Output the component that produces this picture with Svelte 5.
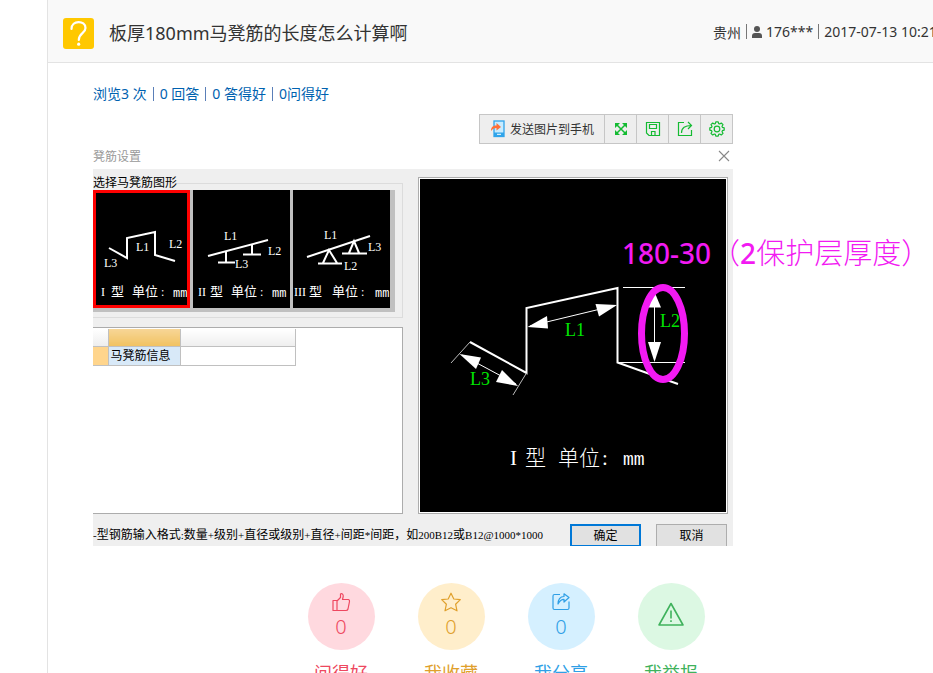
<script>
  const thumbs = [
    {
      box: '93 190 97 118',
      paths: ['M109 248L127 258V238L155 232V255L175 261'],
      labels: [['L1', 136, 251], ['L2', 169, 248], ['L3', 104, 267]],
      type: 'I', typeX: 101, x: 111, unitX: 132, mmX: 173
    },
    {
      box: '193 190 97 118',
      paths: ['M208 256L268 240', 'M226 251V262M218 262.5H235', 'M252 244V254M243 254.5H261'],
      labels: [['L1', 224, 240], ['L2', 268, 255], ['L3', 235, 268]],
      type: 'II', typeX: 198, x: 210, unitX: 231, mmX: 272
    },
    {
      box: '293 190 97 118',
      paths: ['M307 257L370 236', 'M323 263L329 250L337 263M318 263.5H342', 'M349 253L354 241L359 253M342 253.5H367'],
      labels: [['L1', 324, 239], ['L2', 344, 270], ['L3', 368, 251]],
      type: 'III', typeX: 294, x: 309, unitX: 332, mmX: 375
    }
  ];
  let selected = $state(0);
  let info = $state('');

  const stats = ['浏览3 次', '0 回答', '0 答得好', '0问得好'];

  const hint = '-型钢筋输入格式:数量+级别+直径或级别+直径+间距*间距，如200B12或B12@1000*1000';
  const hintParts = hint.match(/[\x21-\x7e]+|[^\x21-\x7e]+/g).map((text) => ({ text, latin: text.charCodeAt(0) < 127 }));

  const actions = [
    { kind: 'good', label: '问得好', count: '0' },
    { kind: 'fav', label: '我收藏', count: '0' },
    { kind: 'share', label: '我分享', count: '0' },
    { kind: 'report', label: '我举报', count: '' }
  ];
</script>

<main class="page">
  <header class="head">
    <svg class="badge" viewBox="0 0 31 31" aria-hidden="true">
      <rect width="31" height="31" rx="3" fill="#ffc800" />
      <path d="M8.500 11C8.500 1.800 22.500 2 22.500 10C22.500 15.500 15.800 15 15.800 22" fill="none" stroke="#fff" stroke-width="2.200" stroke-linecap="round" />
      <circle cx="15.700" cy="26.200" r="1.600" fill="#fff" />
    </svg>
    <h1>板厚180mm马凳筋的长度怎么计算啊</h1>
    <div class="meta">
      <span>贵州</span><i></i>
      <svg width="10" height="12" viewBox="0 0 10 12" aria-hidden="true">
        <circle cx="5" cy="3" r="3" fill="#555" />
        <path d="M0 12V10Q0 7 3 7H7Q10 7 10 10V12Z" fill="#555" />
      </svg>
      <span class="user">176***</span><i></i>
      <time>2017-07-13 10:21</time>
    </div>
  </header>

  <section class="content">
    <p class="stats">
      {#each stats as s, n}{#if n}<i></i>{/if}<span>{s}</span>{/each}
    </p>

    <div class="picture">
      <div class="toolbar">
        <button class="send">
          <svg width="16" height="18" viewBox="0 0 16 18" aria-hidden="true">
            <rect x="4" y="1" width="10" height="15.500" fill="#c8ecff" stroke="#2fa4ea" stroke-width="1.300" />
            <path d="M4 12.500H14V16H4Z" fill="#2fa4ea" />
            <path d="M7 14.300H11" stroke="#fff" />
            <path d="M1 11C1 7 3 5.500 6.500 5.500V3L11 7L6.500 10.500V8C4 8 2.500 9 1 11Z" fill="#ff7038" />
          </svg>
          <span>发送图片到手机</span>
        </button>
        <button aria-label="全屏">
          <svg width="16" height="16" viewBox="0 0 16 16">
            <path d="M3 3L13 13M13 3L3 13" stroke="#14bb32" stroke-width="1.500" />
            <path d="M2 2H7L2 7ZM14 2V7L9 2ZM2 14V9L7 14ZM14 14H9L14 9Z" fill="#14bb32" />
          </svg>
        </button>
        <button aria-label="保存">
          <svg width="16" height="16" viewBox="0 0 16 16" fill="none" stroke="#14bb32" stroke-width="1.200">
            <path d="M1.500 1.500H14.500V14.500H4L1.500 12ZM4.500 3.500H11.500V7.500H4.500ZM6.500 14.500V10.500H10V14.500" />
          </svg>
        </button>
        <button aria-label="分享">
          <svg width="16" height="16" viewBox="0 0 16 16" fill="none" stroke="#14bb32" stroke-width="1.200">
            <path d="M7 1.500H1.500V14.500H14.500V9M4.500 12C4.500 6.500 8 4.500 14.500 4.500M11 1L14.500 4.500L11 8" />
          </svg>
        </button>
        <button aria-label="设置">
          <svg width="16" height="16" viewBox="0 0 16 16" fill="none" stroke="#14bb32" stroke-width="1.200" stroke-linejoin="round">
            <path d="M6.300 2.600L6.800 .8H9.200L9.700 2.600L10.700 3L12.300 2L14 3.700L13 5.300L13.400 6.300L15.200 6.800V9.200L13.400 9.700L13 10.700L14 12.300L12.300 14L10.700 13L9.700 13.400L9.200 15.200H6.800L6.300 13.400L5.300 13L3.700 14L2 12.300L3 10.700L2.600 9.700L.8 9.200V6.800L2.600 6.300L3 5.300L2 3.700L3.700 2L5.300 3Z" />
            <circle cx="8" cy="8" r="2.800" />
          </svg>
        </button>
      </div>

      <div class="caption">
        <span>凳筋设置</span>
        <button aria-label="关闭">
          <svg width="12" height="12" viewBox="0 0 12 12"><path d="M1 1L11 11M11 1L1 11" stroke="#888" stroke-width="1.100" /></svg>
        </button>
      </div>

      <div class="dialog">
        <div class="columns">
          <div class="left">
            <fieldset>
              <legend>选择马凳筋图形</legend>
              <div class="thumbs">
                {#each thumbs as t, n}
                  <button class:selected={selected === n} onclick={() => (selected = n)}>
                    <svg viewBox={t.box}>
                      {#each t.paths as d}<path {d} fill="none" stroke="#fff" stroke-width="2" />{/each}
                      {#each t.labels as [text, x, y]}<text {x} {y} class="tiny">{text}</text>{/each}
                      <text x={t.typeX} y="296" class="tiny">{t.type}</text>
                      <text x={t.x} y="296" class="cjk">型</text>
                      <text x={t.unitX} y="296" class="cjk">单位</text>
                      <text x={t.unitX + 29} y="296" class="tiny">:</text>
                      <text x={t.mmX} y="297" class="mono">mm</text>
                    </svg>
                  </button>
                {/each}
              </div>
            </fieldset>

            <div class="sheet">
              <table>
                <colgroup><col class="c1" /><col class="c2" /><col class="c3" /></colgroup>
                <thead><tr><td></td><td class="on"></td><td></td></tr></thead>
                <tbody>
                  <tr>
                    <td class="mark"></td>
                    <th scope="row"><label for="info">马凳筋信息</label></th>
                    <td><input id="info" bind:value={info} /></td>
                  </tr>
                </tbody>
              </table>
            </div>
          </div>

          <div class="preview">
            <svg viewBox="420 179 306 333">
              <g fill="none" stroke="#fff">
                <path d="M470 342L526.500 373V308L617.500 288V362.500L678 384" stroke-width="2" />
                <path d="M623 287.500H685M618 362.500H685M654.500 295V360M530 326L615 305.500M462 355L516 384" />
                <path d="M470 342L451 363M526.500 373L513 395" stroke="#bbb" />
              </g>
              <g fill="#fff">
                <path d="M527.500 327L547 316L548 328.500Z" />
                <path d="M617 305L595.500 304L599 316.500Z" />
                <path d="M459.500 354L481 357.500L476 369Z" />
                <path d="M518 386L502 370L496 382Z" />
                <path d="M654.500 292L648 307.500H661Z" />
                <path d="M654.500 362L648 342H661Z" />
              </g>
              <g class="dims">
                <text x="565" y="336">L1</text>
                <text x="660" y="327">L2</text>
                <text x="470" y="385">L3</text>
              </g>
              <ellipse cx="663" cy="333.500" rx="21.500" ry="46" fill="none" stroke="#f21af2" stroke-width="7" />
              <g class="big">
                <text x="510" y="465">I</text>
                <text x="525" y="465">型</text>
                <text x="558" y="465">单位</text>
                <text x="602" y="465">:</text>
                <text x="623" y="465" class="bigmono">mm</text>
              </g>
            </svg>
          </div>
        </div>

        <div class="foot">
          <p>{#each hintParts as part}<span class:latin={part.latin}>{part.text}</span>{/each}</p>
          <button class="ok">确定</button>
          <button>取消</button>
        </div>
      </div>

      <div class="note"><b>180-30</b>（<b>2</b>保护层厚度）</div>
    </div>

    <div class="actions">
      {#each actions as a}
        <button class={a.kind}>
          <span class="disc">
            {#if a.kind === 'good'}
              <svg width="20" height="20" viewBox="0 0 20 20"><path d="M2 8.500H6V18.500H2ZM6 9L9.500 5.500V2C11 .8 12.500 2.500 12.200 4.500L11.500 7.500H17.500Q18.800 8 18.500 9.500L17 17Q16.600 18.500 15 18.500H6" /></svg>
            {:else if a.kind === 'fav'}
              <svg width="22" height="20" viewBox="0 0 22 20"><path d="M11 1.200L13.800 7L20.300 7.600L15.600 12.200L17 18.800L11 15.700L5 18.800L6.400 12.200L1.700 7.600L8.200 7Z" /></svg>
            {:else if a.kind === 'share'}
              <svg width="20" height="20" viewBox="0 0 20 20"><path d="M9 2.500H3.500Q2 2.500 2 4V16Q2 17.500 3.500 17.500H16.500Q18 17.500 18 16V9.500M7 12C7 7.500 9 4.500 13 4.500V1.800L18 5.500L13 10V7.300C10 7.300 8.500 9 7 12Z" /></svg>
            {:else}
              <svg class="warn" width="28" height="32" viewBox="0 0 28 32"><path d="M14 2.500L26 24H2ZM14 9.500V17.500M14 19.300V21" /></svg>
            {/if}
            {#if a.count}<span class="count">{a.count}</span>{/if}
          </span>
          <span class="label">{a.label}</span>
        </button>
      {/each}
    </div>
  </section>
</main>

<style>
  .page {
    box-sizing: border-box;
    height: 100vh;
    margin-left: 47px;
    border-left: 1px solid #e3e3e3;
    overflow: hidden;
    background: #fff;
    color: #333;
    font-family: "Noto Sans", "Noto Sans CJK SC", sans-serif;
    font-size: 14px;
  }
  h1, p, fieldset, legend { margin: 0; padding: 0; }
  button { margin: 0; padding: 0; border: 0; background: none; font: inherit; color: inherit; cursor: pointer; }
  svg { display: block; flex: none; }

  .head {
    display: flex;
    align-items: center;
    box-sizing: border-box;
    height: 63px;
    padding: 4px 0 0 15px;
    border-bottom: 1px solid #e3e3e3;
    background: #f9f9f9;
    white-space: nowrap;
  }
  .badge { width: 31px; height: 31px; margin-right: 15px; }
  h1 { flex: 1; font-size: 18px; line-height: 28px; font-weight: 400; }
  .meta { display: flex; align-items: center; flex: 0 0 220px; min-width: 0; padding-bottom: 3px; }
  .meta i { flex: none; width: 1px; height: 15px; margin: 0 5px; background: #777; }
  .user { margin-left: 4px; }

  .content { padding: 21px 14px 0 45px; }
  .stats { display: flex; align-items: center; line-height: 20px; color: #0062b0; }
  .stats i { width: 1px; height: 14px; margin: 0 6px; background: #5a7fb8; }

  .picture { position: relative; width: 640px; margin-top: 10px; }
  .toolbar {
    display: flex;
    width: max-content;
    margin-left: auto;
    height: 30px;
    box-sizing: border-box;
    border: 1px solid #c6c6c6;
    background: #eee;
  }
  .toolbar button { display: flex; align-items: center; justify-content: center; width: 32px; border-left: 1px solid #c6c6c6; }
  .toolbar .send { width: 124px; gap: 4px; border-left: 0; font-size: 12px; }

  .caption { display: flex; justify-content: space-between; align-items: center; box-sizing: border-box; height: 25px; padding: 0 3px 2px 0; font-size: 12px; color: #999; }

  .dialog { padding: 8px 5px 0 0; background: #efefef; color: #000; font-size: 12px; font-family: "Liberation Serif", "Noto Sans CJK SC", serif; }
  .columns { display: grid; grid-template-columns: 1fr 1fr; gap: 15px; }
  .left { display: flex; flex-direction: column; gap: 9px; min-width: 0; }
  fieldset { min-width: 0; border: 1px solid #dcdcdc; border-left: 0; padding-bottom: 5px; }
  legend { line-height: 13px; }
  .thumbs { display: flex; gap: 3px; width: 297px; padding: 0 5px 4px 0; background: #c0c0c0; }
  .thumbs button { flex: 1; background: #000; }
  .thumbs .selected { outline: 3px solid #f00; outline-offset: -3px; }
  text { fill: #fff; }
  .tiny { font: 12px "Liberation Serif", serif; }
  .cjk { font: 400 13px "Noto Sans CJK SC", sans-serif; }
  .mono { font: 12px "Liberation Mono", monospace; }

  .sheet { flex: 1; box-sizing: border-box; padding-top: 1px; border: 1px solid #acacac; border-left: 0; background: #fff; }
  table { width: 202px; table-layout: fixed; border-collapse: collapse; }
  .c1 { width: 15px; }
  .c2 { width: 72px; }
  .c3 { width: 115px; }
  td, th { height: 18px; padding: 0; border: 1px solid #c0c0c0; border-left: 0; font-weight: 400; text-align: left; }
  thead td { height: 17px; border-top: 0; background: linear-gradient(#fff, #eee); }
  thead .on { background: linear-gradient(#f7d697, #f1c261); }
  .mark { background: #ffd58c; }
  th { background: #d8e9f8; line-height: 18px; white-space: nowrap; }
  th label { padding-left: 2px; }
  td input { display: block; box-sizing: border-box; width: 100%; height: 18px; padding: 0 2px; border: 0; background: none; font: inherit; }

  .preview { border: 1px solid #acacac; padding: 1px; background: #fff; }
  .preview svg { background: #000; }
  .dims text { fill: #00e400; font: 18px "Liberation Serif", serif; }
  .big text { font: 300 21px "Liberation Serif", "Noto Sans CJK SC", serif; }
  .big .bigmono { font: 18px "Liberation Mono", monospace; }

  .foot { display: flex; align-items: flex-start; padding: 10px 1px 0 0; }
  .foot p { flex: 1; width: 0; line-height: 22px; white-space: nowrap; }
  .latin { font-size: 11px; }
  .foot button { box-sizing: border-box; width: 71px; height: 22px; margin-left: 15px; border: 1px solid #adadad; border-bottom-width: 0; background: #e1e1e1; line-height: 20px; }
  .foot .ok { border: 2px solid #0078d7; border-bottom-width: 1px; line-height: 18px; }

  .note {
    position: absolute;
    left: 529px;
    top: 117px;
    font: 300 29px/40px "Noto Sans CJK SC", sans-serif;
    color: #f21af2;
    white-space: nowrap;
  }
  .note b { font-family: "Noto Sans", sans-serif; font-weight: 500; font-size: 28px; }

  .actions { display: flex; justify-content: center; gap: 43px; margin-top: 37px; }
  .actions button { display: flex; flex-direction: column; align-items: center; width: 67px; }
  .disc { display: flex; flex-direction: column; align-items: center; justify-content: center; width: 67px; height: 67px; border-radius: 50%; }
  .disc path { fill: none; stroke: currentColor; stroke-width: 1.200; stroke-linejoin: round; }
  .disc .warn path { stroke-width: 1.600; }
  .count { font-size: 20px; line-height: 30px; font-weight: 300; }
  .label { margin-top: 11px; font-size: 18px; line-height: 24px; font-weight: 400; white-space: nowrap; }
  .good { color: #ee4860; }
  .good .disc { background: #ffd9df; }
  .fav { color: #e0a02c; }
  .fav .disc { background: #ffeecb; }
  .share { color: #2f9fe6; }
  .share .disc { background: #d5f0ff; }
  .report { color: #3fb25c; }
  .report .disc { background: #dcf8e3; }
</style>
